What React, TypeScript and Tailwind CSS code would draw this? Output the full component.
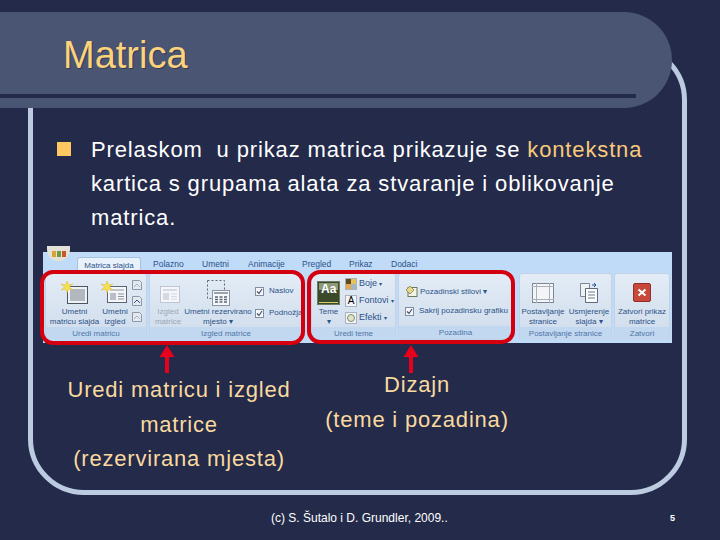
import type { ReactNode } from 'react'

const font = "font-['Liberation_Sans',Arial,sans-serif]"

function Group({ label, width, children, labelClass = '' }: { label: string; width: string; children: ReactNode; labelClass?: string }) {
  return (
    <div className={`${width} flex flex-col rounded-[3px] border border-[#c3d3e6] bg-gradient-to-b from-[#e3ecf6] to-[#cfdcec]`}>
      <div className="flex flex-1">{children}</div>
      <div className={`h-[13px] rounded-b-[3px] bg-[#c2d8f0] text-center text-[8px] leading-[13px] text-[#4f76a8] ${labelClass}`}>{label}</div>
    </div>
  )
}

function Big({ icon, lines, width, faded }: { icon: ReactNode; lines: string[]; width: string; faded?: boolean }) {
  return (
    <div className={`${width} flex shrink-0 flex-col items-center pt-[4px]`}>
      <div className="flex h-[29px] items-center justify-center">{icon}</div>
      <div className={`whitespace-nowrap text-center text-[8px] leading-[10px] ${faded ? 'text-[#9aa5b3]' : 'text-[#2c5288]'}`}>
        {lines.map(l => (
          <div key={l}>{l}</div>
        ))}
      </div>
    </div>
  )
}

function Check({ label }: { label: string }) {
  return (
    <div className="flex items-center gap-[5px] whitespace-nowrap text-[8px] leading-[10px] text-[#2c5288]">
      <svg width="9" height="9" viewBox="0 0 9 9">
        <rect x="0.5" y="0.5" width="8" height="8" fill="#f4f6fa" stroke="#7f8ea3" />
        <path d="M2 4.5L4 6.5L7 2" fill="none" stroke="#3f4a5c" strokeWidth="1.1" />
      </svg>
      {label}
    </div>
  )
}

function Star({ x, y }: { x: number; y: number }) {
  return (
    <path
      d={`M${x} ${y - 6}L${x + 1.5} ${y - 2}L${x + 6} ${y - 3}L${x + 2.5} ${y}L${x + 6} ${y + 3}L${x + 1.5} ${y + 2}L${x} ${y + 6}L${x - 1.5} ${y + 2}L${x - 6} ${y + 3}L${x - 2.5} ${y}L${x - 6} ${y - 3}L${x - 1.5} ${y - 2}Z`}
      fill="#f6e04f"
      stroke="#e2b93a"
      strokeWidth="0.5"
    />
  )
}

function SlideIcon() {
  return (
    <svg width="28" height="24" viewBox="0 0 28 24">
      <rect x="6.5" y="5.5" width="20" height="17" fill="#eef1f5" stroke="#4a5560" />
      <rect x="9" y="8" width="15" height="12" fill="#b2b8bf" />
      <Star x={6} y={6} />
    </svg>
  )
}

function LayoutIcon({ star, faded }: { star?: boolean; faded?: boolean }) {
  const c = faded ? '#bdc6d2' : '#5a6674'
  return (
    <svg width="28" height="24" viewBox="0 0 28 24">
      <rect x="6.5" y="5.5" width="19" height="16" fill="#f4f6f9" stroke={c} />
      <rect x="9" y="8" width="14" height="2" fill={faded ? '#d4dae2' : '#c3c8cf'} />
      <rect x="9" y="12" width="6" height="7" fill={faded ? '#d4dae2' : '#b9bec6'} />
      <path d="M17 13h6M17 15.5h6M17 18h6" stroke={faded ? '#d4dae2' : '#8b929c'} />
      {star && <Star x={6} y={6} />}
    </svg>
  )
}

function TinyIcon({ x }: { x?: boolean }) {
  return (
    <svg width="12" height="12" viewBox="0 0 12 12">
      <path d="M1.5 1.5h7l2 2v7h-9z" fill="#e4e9f0" stroke="#8c98a8" />
      <path d="M3 8l3-3 3 3" fill="none" stroke={x ? '#2c5288' : '#a7b2c0'} />
    </svg>
  )
}

function PlaceholderIcon() {
  return (
    <svg width="24" height="27" viewBox="0 0 24 27">
      <rect x="1.5" y="1.5" width="17" height="18" fill="none" stroke="#5d6775" strokeDasharray="2 2" />
      <rect x="6.5" y="11.5" width="17" height="15" fill="#f7f8fa" stroke="#8a94a2" />
      <path d="M8 14h14" stroke="#9aa3af" strokeWidth="2" />
      <path d="M9 18h3M13.5 18h3M18 18h3M9 20.5h3M13.5 20.5h3M18 20.5h3M9 23h3M13.5 23h3M18 23h3" stroke="#5b6673" strokeWidth="1.4" />
    </svg>
  )
}

function ThemeIcon() {
  return (
    <div className="flex h-[24px] w-[23px] flex-col border border-[#6f7d5f] bg-[#3c4a2c] p-px">
      <div className="h-[7px] bg-[#8c9a78]" />
      <div className="relative flex-1 text-[12px] font-bold leading-[10px] text-white">
        <span className="absolute left-[2px] top-[-6px]">Aa</span>
      </div>
      <div className="h-px bg-[#d8cc6c]" />
    </div>
  )
}

function SmallRow({ icon, label }: { icon: ReactNode; label: string }) {
  return (
    <div className="flex h-[12px] items-center gap-[2px] whitespace-nowrap text-[9px] text-[#2c5288]">
      <div className="flex h-[12px] w-[12px] items-center justify-center border border-[#a9b3bf] bg-[#f3f5f8]">{icon}</div>
      {label}
      <span className="text-[6px]"> ▾</span>
    </div>
  )
}

function Ribbon() {
  return (
    <div className={`relative ml-[43px] mt-[17px] flex h-[91px] w-[629px] flex-col bg-[#bfdbf8] ${font}`}>
      {/* office orb */}
      <div className="absolute left-[4px] top-[-6px] flex h-[15px] w-[23px] items-center justify-center gap-px rounded-b-full bg-[#e4e2d8]">
        <span className="h-[6px] w-[4px] bg-[#d8a43a]" />
        <span className="h-[6px] w-[4px] bg-[#6f9a3f]" />
        <span className="h-[6px] w-[4px] bg-[#c9572d]" />
      </div>
      {/* tabs */}
      <div className="flex h-[21px] items-end whitespace-nowrap text-[8.5px] text-[#2c5288]">
        <div className="ml-[34px] flex h-[16px] w-[64px] items-center justify-center rounded-t-[3px] border border-b-0 border-[#a9c4e2] bg-[#e9f1fa] text-[8px]">Matrica slajda</div>
        <div className="ml-[12px] h-[16px] w-[49px] leading-[14px]">Polazno</div>
        <div className="h-[16px] w-[46px] leading-[14px]">Umetni</div>
        <div className="h-[16px] w-[54px] leading-[14px]">Animacije</div>
        <div className="h-[16px] w-[47px] leading-[14px]">Pregled</div>
        <div className="h-[16px] w-[42px] leading-[14px]">Prikaz</div>
        <div className="h-[16px] leading-[14px]">Dodaci</div>
      </div>
      {/* groups */}
      <div className="flex h-[67px] gap-[2px] pl-[2px]">
        <Group label="Uredi matricu" width="w-[102px]">
          <Big width="w-[49px] ml-[4px]" icon={<SlideIcon />} lines={['Umetni', 'matricu slajda']} />
          <Big width="w-[32px]" icon={<LayoutIcon star />} lines={['Umetni', 'izgled']} />
          <div className="flex flex-col gap-[4px] pt-[5px]">
            <TinyIcon />
            <TinyIcon x />
            <TinyIcon />
          </div>
        </Group>
        <Group label="Izgled matrice" width="w-[154px]">
          <Big width="w-[32px] ml-[2px]" faded icon={<LayoutIcon faded />} lines={['Izgled', 'matrice']} />
          <Big width="w-[68px]" icon={<PlaceholderIcon />} lines={['Umetni rezervirano', 'mjesto ▾']} />
          <div className="flex flex-col gap-[12px] pl-[3px] pt-[12px]">
            <Check label="Naslov" />
            <Check label="Podnožja" />
          </div>
        </Group>
        <div className="w-[4px]" />
        <Group label="Uredi teme" width="w-[85px]">
          <Big width="w-[33px]" icon={<ThemeIcon />} lines={['Teme', '▾']} />
          <div className="flex flex-col gap-[5px] pt-[4px]">
            <SmallRow
              label="Boje"
              icon={
                <svg width="10" height="10" viewBox="0 0 10 10">
                  <rect width="5" height="5" fill="#5c4a22" />
                  <rect x="5" width="5" height="5" fill="#e8c35a" />
                  <rect y="5" width="5" height="5" fill="#e6a84a" />
                  <rect x="5" y="5" width="5" height="5" fill="#9fb6c9" />
                </svg>
              }
            />
            <SmallRow label="Fontovi" icon={<span className="text-[10px] leading-none text-black">A</span>} />
            <SmallRow label="Efekti" icon={<span className="h-[8px] w-[8px] rounded-full border border-[#7e8a6a] bg-[#dfe3cf]" />} />
          </div>
        </Group>
        <Group label="Pozadina" width="w-[115px]">
          <div className="flex flex-col gap-[8px] pl-[6px] pt-[11px]">
            <div className="flex items-center gap-[2px] whitespace-nowrap text-[8px] text-[#2c5288]">
              <svg width="13" height="13" viewBox="0 0 13 13">
                <rect x="3" y="2.5" width="9" height="9" fill="#f2f4ea" stroke="#6c7a58" />
                <path d="M1 5l4-4 4 4-4 4z" fill="#e6d98c" stroke="#7e6f3c" strokeWidth="0.7" />
              </svg>
              Pozadinski stilovi ▾
            </div>
            <Check label="Sakrij pozadinsku grafiku" />
          </div>
        </Group>
        <div className="w-[2px]" />
        <Group label="Postavljanje stranice" width="w-[93px]">
          <Big
            width="w-[46px]"
            lines={['Postavljanje', 'stranice']}
            icon={
              <svg width="22" height="20" viewBox="0 0 22 20">
                <rect x="0.5" y="0.5" width="21" height="19" fill="#f3f5f8" stroke="#7d8794" />
                <path d="M4.5 0v20M17.5 0v20M0 3.5h22M0 16.5h22" stroke="#a8b0bb" />
              </svg>
            }
          />
          <Big
            width="w-[46px]"
            lines={['Usmjerenje', 'slajda ▾']}
            icon={
              <svg width="20" height="21" viewBox="0 0 20 21">
                <path d="M1.5 1.5h9v13h-9z" fill="#eef1f5" stroke="#7d8794" />
                <path d="M6.5 6.5h12v14h-12z" fill="#fbfcfd" stroke="#5f6a78" />
                <path d="M9 10h7M9 13h7M9 16h7" stroke="#6e7a88" />
                <path d="M13 3h4M15 1l2 2-2 2" fill="none" stroke="#2c5288" />
              </svg>
            }
          />
        </Group>
        <Group label="Zatvori" width="w-[56px]">
          <Big
            width="w-full"
            lines={['Zatvori prikaz', 'matrice']}
            icon={
              <svg width="18" height="19" viewBox="0 0 18 19">
                <rect x="0.5" y="0.5" width="17" height="18" rx="1.5" fill="#c8483c" stroke="#8f2f28" />
                <path d="M5.5 6.5l7 6M12.5 6.5l-7 6" stroke="#fff" strokeWidth="2" />
              </svg>
            }
          />
        </Group>
      </div>
      {/* red outlines over the ribbon */}
      <div className="absolute left-[-3px] top-[18px] h-[75px] w-[265px] rounded-[13px] border-[4px] border-[#d4000f]" />
      <div className="absolute left-[264px] top-[18px] h-[74px] w-[208px] rounded-[13px] border-[4px] border-[#d4000f]" />
    </div>
  )
}

function ArrowUp({ className }: { className: string }) {
  return (
    <svg width="16" height="28" viewBox="0 0 16 28" className={`block self-start ${className}`}>
      <path d="M8 0L15.5 12H10V28H6V12H0.5Z" fill="#e8001c" />
    </svg>
  )
}

export default function App() {
  return (
    <div className={`relative h-[540px] w-[720px] overflow-hidden bg-[#232a4a] ${font}`}>
      {/* slide frame, sits behind the title band */}
      <div className="absolute left-[28px] top-[44px] h-[451px] w-[659px] rounded-[56px] border-[5px] border-[#bccbe0]" />

      <div className="relative pt-[12px]">
        <div className="h-[96px] w-[672px] overflow-hidden rounded-r-[48px] bg-[#4a5473] pt-[20px]">
          <div className="pl-[63px] text-[38px] leading-[46px] text-[#fcd27a] [text-shadow:1px_1px_0_#333a58]">Matrica</div>
          <div className="mt-[16px] h-[4px] w-[636px] bg-[#232a4a]" />
        </div>

        <div className="mt-[25px] flex pl-[57px]">
          <div className="mt-[9px] h-[14px] w-[14px] shrink-0 bg-[#fcc860]" />
          <div className="ml-[20px] whitespace-nowrap text-[22px] leading-[34px] tracking-[0.86px] text-white">
            Prelaskom&nbsp; u prikaz matrica prikazuje se <span className="text-[#f9c97a]">kontekstna</span>
            <br />
            kartica s grupama alata za stvaranje i oblikovanje
            <br />
            matrica.
          </div>
        </div>

        <Ribbon />

        <div className="flex">
          <div className="ml-[58px] flex w-[242px] flex-col items-center">
            <ArrowUp className="ml-[101px] mt-[2px]" />
            <div className="text-center text-[22px] leading-[34.5px] tracking-[0.8px] text-[#f9d99f]">
              Uredi matricu i izgled
              <br />
              matrice
              <br />
              (rezervirana mjesta)
            </div>
          </div>
          <div className="ml-[17px] flex w-[200px] flex-col items-center">
            <ArrowUp className="ml-[86px] mt-[2px]" />
            <div className="mt-[-6px] text-center text-[22px] leading-[35px] tracking-[0.8px] text-[#f9d99f]">
              Dizajn
              <br />
              (teme i pozadina)
            </div>
          </div>
        </div>
      </div>

      <div className="absolute bottom-[14px] left-[271px] text-[12px] leading-[16px] text-white">(c) S. Šutalo i D. Grundler, 2009..</div>
      <div className="absolute bottom-[14px] left-[670px] text-[9px] font-bold leading-[16px] text-white">5</div>
    </div>
  )
}
